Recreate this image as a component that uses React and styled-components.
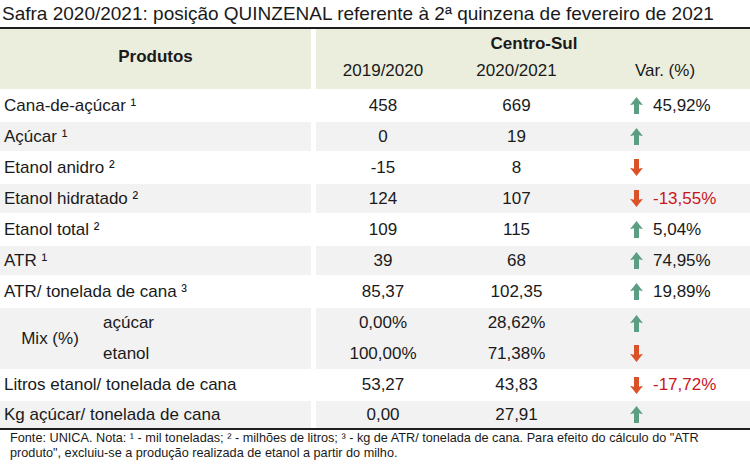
import styled, { createGlobalStyle } from "styled-components";

const GlobalStyle = createGlobalStyle`
  html, body {
    margin: 0;
    padding: 0;
    background: #fff;
  }
  body {
    font-family: "Liberation Sans", Arial, sans-serif;
    color: #1a1a1a;
  }
`;

const rows = [
  { label: "Cana-de-açúcar ¹", a: "458", b: "669", dir: "up", pct: "45,92%" },
  { label: "Açúcar ¹", a: "0", b: "19", dir: "up", pct: "" },
  { label: "Etanol anidro ²", a: "-15", b: "8", dir: "down", pct: "" },
  { label: "Etanol hidratado ²", a: "124", b: "107", dir: "down", pct: "-13,55%" },
  { label: "Etanol total ²", a: "109", b: "115", dir: "up", pct: "5,04%" },
  { label: "ATR ¹", a: "39", b: "68", dir: "up", pct: "74,95%" },
  { label: "ATR/ tonelada de cana ³", a: "85,37", b: "102,35", dir: "up", pct: "19,89%" },
];

const mix = [
  { label: "açúcar", a: "0,00%", b: "28,62%", dir: "up" },
  { label: "etanol", a: "100,00%", b: "71,38%", dir: "down" },
];

const tail = [
  { label: "Litros etanol/ tonelada de cana", a: "53,27", b: "43,83", dir: "down", pct: "-17,72%", h: 28 },
  { label: "Kg açúcar/ tonelada de cana", a: "0,00", b: "27,91", dir: "up", pct: "", h: 27 },
];

function Arrow({ dir }) {
  const up = dir === "up";
  return (
    <ArrowIcon width="13" height="17" viewBox="0 0 13 17">
      <path
        d={
          up
            ? "M6.5 0 L13 8.3 L9 7.2 L9 17 L4 17 L4 7.2 L0 8.3 Z"
            : "M6.5 17 L13 8.7 L9 9.8 L9 0 L4 0 L4 9.8 L0 8.7 Z"
        }
        fill={up ? "#5c9e84" : "#dc5228"}
      />
    </ArrowIcon>
  );
}

function DataCells({ a, b, dir, pct }) {
  return (
    <Data>
      <Num>{a}</Num>
      <Num>{b}</Num>
      <VarCell>
        <Arrow dir={dir} />
        {pct && <Pct $neg={dir === "down"}>{pct}</Pct>}
      </VarCell>
    </Data>
  );
}

export default function App() {
  return (
    <Page>
      <GlobalStyle />
      <Title>Safra 2020/2021: posição QUINZENAL referente à 2ª quinzena de fevereiro de 2021</Title>
      <Table>
        <HeadRow>
          <HeadLabel>Produtos</HeadLabel>
          <HeadData>
            <Region>Centro-Sul</Region>
            <Years>
              <span>2019/2020</span>
              <span>2020/2021</span>
              <span>Var. (%)</span>
            </Years>
          </HeadData>
        </HeadRow>

        {rows.map((r, i) => (
          <Row key={r.label} $shade={i % 2 === 1} $h={29}>
            <Label>{r.label}</Label>
            <DataCells {...r} />
          </Row>
        ))}

        <MixRow>
          <MixLabel>
            <MixTitle>Mix (%)</MixTitle>
            <MixSubs>
              {mix.map((m) => (
                <MixSub key={m.label}>{m.label}</MixSub>
              ))}
            </MixSubs>
          </MixLabel>
          <MixData>
            {mix.map((m) => (
              <MixLine key={m.label}>
                <DataCells {...m} />
              </MixLine>
            ))}
          </MixData>
        </MixRow>

        {tail.map((r, i) => (
          <Row key={r.label} $shade={i % 2 === 1} $h={r.h}>
            <Label>{r.label}</Label>
            <DataCells {...r} />
          </Row>
        ))}
      </Table>
      <Footer>
        Fonte: UNICA. Nota: ¹ - mil toneladas; ² - milhões de litros; ³ - kg de ATR/ tonelada de cana. Para efeito do cálculo do "ATR
        <br />
        produto", excluiu-se a produção realizada de etanol a partir do milho.
      </Footer>
    </Page>
  );
}

const Page = styled.div`
  width: 750px;
  height: 464px;
  overflow: hidden;
  background: #fff;
`;

const Title = styled.div`
  font-size: 19px;
  line-height: 27px;
  padding-left: 2px;
  white-space: nowrap;
  color: #1a1a1a;
`;

const Table = styled.div`
  border-top: 2px solid #1e1e1e;
  border-bottom: 2px solid #1e1e1e;
  display: flex;
  flex-direction: column;
  gap: 2px;
`;

const HeadRow = styled.div`
  display: flex;
  gap: 5px;
  height: 60px;
`;

const HeadLabel = styled.div`
  width: 311px;
  background: #ebeedd;
  display: flex;
  align-items: center;
  justify-content: center;
  font-weight: bold;
  font-size: 17px;
  padding-bottom: 4px;
  box-sizing: border-box;
`;

const HeadData = styled.div`
  flex: 1;
  background: #ebeedd;
  display: flex;
  flex-direction: column;
  padding-top: 4px;
`;

const Region = styled.div`
  text-align: center;
  font-weight: bold;
  font-size: 17px;
  line-height: 22px;
  padding-left: 2px;
`;

const Years = styled.div`
  display: grid;
  grid-template-columns: 134px 133px 1fr;
  font-size: 17px;
  line-height: 22px;
  margin-top: 5px;
  text-align: center;
  color: #1a1a1a;
  & > span:last-child {
    padding-right: 3px;
  }
`;

const Row = styled.div`
  display: flex;
  gap: 5px;
  height: ${(p) => p.$h}px;
  & > * {
    background: ${(p) => (p.$shade ? "#f2f2f2" : "#fff")};
  }
`;

const Label = styled.div`
  width: 311px;
  padding-left: 4px;
  box-sizing: border-box;
  display: flex;
  align-items: center;
  font-size: 17px;
  white-space: nowrap;
`;

const Data = styled.div`
  flex: 1;
  display: grid;
  grid-template-columns: 134px 133px 1fr;
  align-items: center;
  font-size: 17px;
`;

const Num = styled.div`
  text-align: center;
`;

const VarCell = styled.div`
  display: flex;
  align-items: center;
  padding-left: 47px;
  gap: 10px;
`;

const ArrowIcon = styled.svg`
  display: block;
  flex: none;
`;

const Pct = styled.span`
  color: ${(p) => (p.$neg ? "#c8161d" : "#1a1a1a")};
`;

const MixRow = styled.div`
  display: flex;
  gap: 5px;
  height: 61px;
`;

const MixLabel = styled.div`
  width: 311px;
  background: #f2f2f2;
  display: flex;
  align-items: center;
  font-size: 17px;
`;

const MixTitle = styled.div`
  width: 100px;
  text-align: center;
  padding-right: 1px;
`;

const MixSubs = styled.div`
  display: flex;
  flex-direction: column;
  align-self: stretch;
`;

const MixSub = styled.div`
  flex: 1;
  display: flex;
  align-items: center;
  padding-left: 2px;
`;

const MixData = styled.div`
  flex: 1;
  background: #f2f2f2;
  display: flex;
  flex-direction: column;
`;

const MixLine = styled.div`
  flex: 1;
  display: flex;
`;

const Footer = styled.div`
  font-size: 12.7px;
  line-height: 15px;
  padding: 1px 0 0 10px;
  white-space: nowrap;
  color: #1a1a1a;
`;
